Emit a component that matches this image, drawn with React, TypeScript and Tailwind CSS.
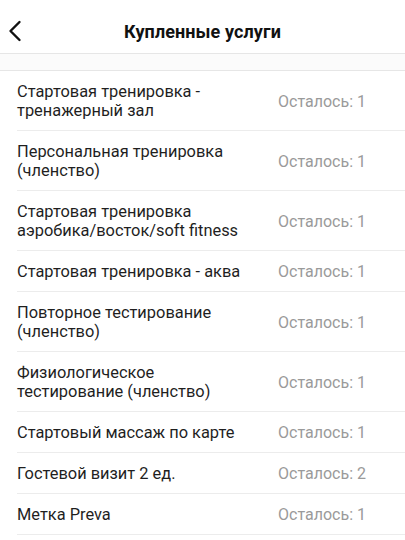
import { ReactNode } from "react";

const services: { name: ReactNode; left: number }[] = [
  { name: <>Стартовая тренировка -<br />тренажерный зал</>, left: 1 },
  { name: <>Персональная тренировка<br />(членство)</>, left: 1 },
  { name: <>Стартовая тренировка<br />аэробика/восток/soft fitness</>, left: 1 },
  { name: "Стартовая тренировка - аква", left: 1 },
  { name: <>Повторное тестирование<br />(членство)</>, left: 1 },
  { name: <>Физиологическое<br />тестирование (членство)</>, left: 1 },
  { name: "Стартовый массаж по карте", left: 1 },
  { name: "Гостевой визит 2 ед.", left: 2 },
  { name: "Метка Preva", left: 1 },
];

const BackIcon = () => (
  <svg width="14" height="22" viewBox="0 0 14 22" fill="none">
    <path d="M11.5 2 L2.5 11 L11.5 20" stroke="#111" strokeWidth="2.4" strokeLinecap="round" strokeLinejoin="round" />
  </svg>
);

export default function App() {
  return (
    <div
      className="w-[405px] h-[540px] overflow-hidden bg-white text-[#222]"
      style={{ fontFamily: "Roboto, 'Noto Sans', sans-serif" }}
    >
      <header className="relative h-[54px] flex items-center justify-center border-b border-[#e6e6e6]">
        <button className="absolute left-[8px] top-[20px]">
          <BackIcon />
        </button>
        <h1 className="text-[18px] font-bold text-[#111] mt-[9px] tracking-[0.1px]">Купленные услуги</h1>
      </header>
      <div className="h-[17px] bg-[#fbfbfb] border-b border-[#e6e6e6]" />
      <ul className="pl-[17px]">
        {services.map((s, i) => (
          <li
            key={i}
            className="flex items-center justify-between pt-[11px] pb-[10px] pr-[39px] border-b border-[#ececec]"
          >
            <span className="text-[16.4px] leading-[19px] text-[#1f1f1f]">{s.name}</span>
            <span className="text-[16px] leading-[19px] text-[#9a9a9a] whitespace-nowrap">
              Осталось: {s.left}
            </span>
          </li>
        ))}
      </ul>
    </div>
  );
}
